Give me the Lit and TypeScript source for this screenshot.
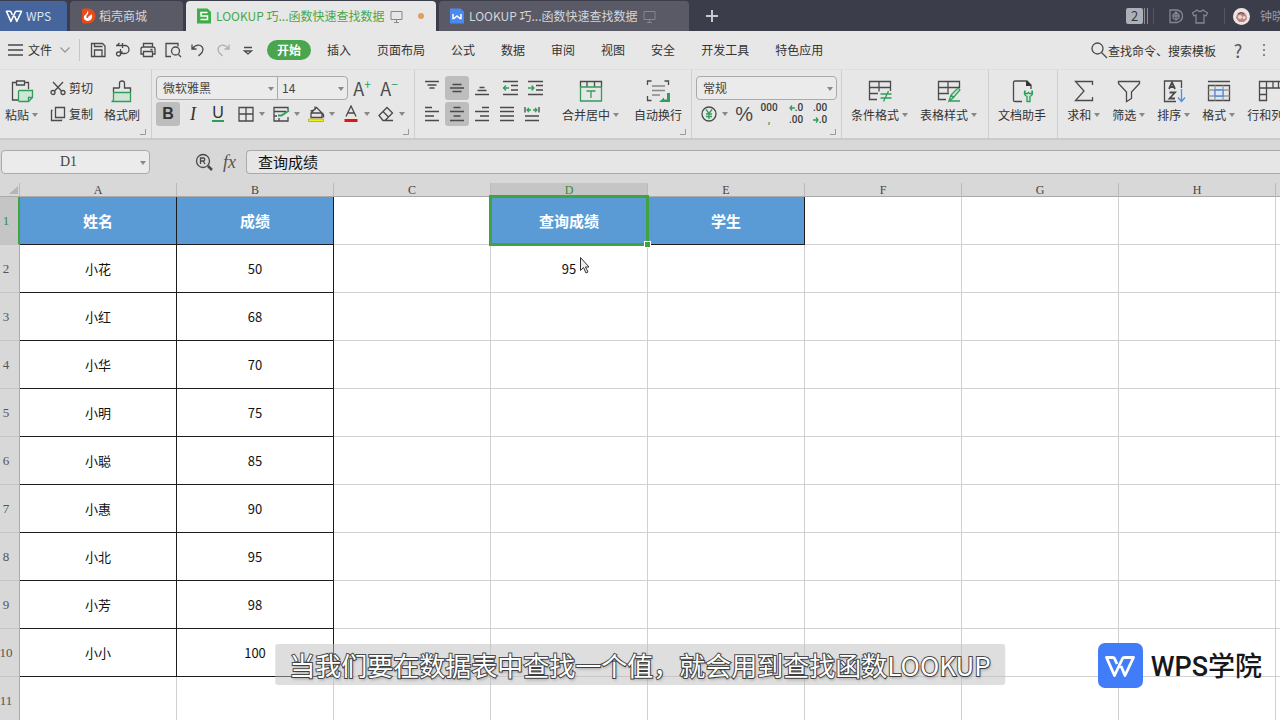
import { LitElement, html, svg, css, nothing } from "lit";
import type { SVGTemplateResult } from "lit";
import { customElement, state } from "lit/decorators.js";
import { classMap } from "lit/directives/class-map.js";

type Glyph = SVGTemplateResult;

const icons: Record<string, Glyph> = {
  menu: svg`<path d="M1 4h15M1 9h15M1 14h15"/>`,
  save: svg`<path d="M2.500 2.500h11l2.500 2.500v10.500H2.500zM5.500 2.500v3h8M5.500 15v-6h7.500v6"/>`,
  output: svg`<path d="M2 4.500h9a3.500 3.500 0 0 1 0 8H6.500M5.500 2L3 4.500M8.500 2v5M6.500 8v5a2 2 0 1 1-2-2h4"/>`,
  print: svg`<path d="M4.500 6V2.500h9V6M4.500 13H2V8q0-2 2-2h10q2 0 2 2v5h-2.500M4.500 10.500h9v5h-9zM11.500 8.500h2"/>`,
  preview: svg`<path d="M7 15.500H2v-13h12v3M14.500 13.500l2.500 2.500"/><circle cx="11.500" cy="10" r="4"/>`,
  undo: svg`<path d="M3 3.500v4.500h4.500M3.500 7.500Q7 3 11.500 4.500Q15.500 7 13 11.500L9.500 15"/>`,
  redo: svg`<path d="M15 3.500v4.500h-4.500M14.500 7.500Q11 3 6.500 4.500Q2.500 7 5 11.500L8.500 15"/>`,
  more: svg`<path d="M5 6.500h8M5.500 10l3.500 3 3.500-3z"/>`,
  search: svg`<circle cx="7.500" cy="7.500" r="5.500"/><path d="M11.500 11.500L17 17"/>`,
  paste: svg`<path d="M6 3.500H2.500v17.500H8M15 3.500h3.500V10M6.500 2h8v4h-8z"/><path class="gf" d="M8.500 12.500q0-1 1-1h13v7l-4 4H9.500q-1 0-1-1zM22.500 18.500h-4v4"/>`,
  cut: svg`<path d="M4 3l8.500 9M14 3L5.500 12"/><circle cx="4" cy="13.500" r="2"/><circle cx="14" cy="13.500" r="2"/>`,
  copy: svg`<path d="M6.500 2.500h9v10h-9zM3.500 5.500h-1v10h10v-1"/>`,
  painter: svg`<path d="M9.500 9V4q0-2 2.500-2t2.500 2v5h6v4M9.500 9h-6v4"/><path class="gf" d="M3.500 13.500h17V22.500H1.500q2 0 2-2z"/>`,
  border: svg`<path d="M2 2.500h14v13.500H2zM9 2.500V16M2 9h14"/>`,
  format: svg`<path d="M16 5V2.500H2v13.500h14v-4M2 6.500h12M2 11h3M7 16v-3"/><path class="g" stroke-width="2" d="M6 10.500h3.500L17 5.500"/>`,
  fill: svg`<path d="M4 12.500V8l5.500-5.500L15 8v4.500zM4 8h11M8 1.500v3L3.500 6M15.500 8q1.500 2 1 4.500"/><path d="M1.500 14h15v2.500h-15z" fill="#f2ee18" stroke="#b9b630" stroke-width="1"/>`,
  color: svg`<path d="M4 11.500L9 1l5 10.500M6 8h6"/><path d="M2.500 15.500h13" stroke="#df1515" stroke-width="3"/>`,
  eraser: svg`<path d="M2 10.500L10 2.500l5.500 5.500L8 15.500H6zM6 6.500l5.500 5.500M8 15.500h8"/>`,
  vtop: svg`<path d="M2 2.500h14M4.500 6h9M6.500 9h5"/>`,
  vmid: svg`<path d="M4.500 5.500h9M2 9h14M4.500 12.500h9"/>`,
  vbot: svg`<path d="M6.500 8.500h5M4.500 11.500h9M2 15.500h14"/>`,
  left: svg`<path d="M2 2.500h7M2 6.500h14M2 11h9M2 15.500h14"/>`,
  center: svg`<path d="M5.500 2.500h7M2 6.500h14M5.500 11h7M2 15.500h14"/>`,
  right: svg`<path d="M9 2.500h7M2 6.500h14M7 11h9M2 15.500h14"/>`,
  justify: svg`<path d="M2 2.500h14M2 6.500h14M2 11h14M2 15.500h14"/>`,
  spread: svg`<path d="M2 2v5.500M16 2v5.500M2 11h14M2 15.500h14"/><path class="g" d="M8 5H4M6 3L4 5l2 2M10 5h4M12 3l2 2-2 2"/>`,
  outdent: svg`<path d="M2 2.500h15M10 6.500h7M10 11h7M2 15.500h15"/><path class="g" d="M8 9H2.500M5 6.500L2.500 9 5 11.500"/>`,
  indent: svg`<path d="M2 2.500h15M10 6.500h7M10 11h7M2 15.500h15"/><path class="g" d="M2 9h6M5.500 6.500L8 9l-2.500 2.500"/>`,
  merge: svg`<path d="M1.500 8V2.500h21V8M8 2.500V8M15.500 2.500V8"/><path class="g" d="M1.500 8h21v14h-21zM7.500 12h9M12 12v7"/>`,
  wrap: svg`<path d="M1.500 6V2h4M18.500 2h4v4M1.500 17v4.500h4"/><path d="M6 7h13M6 11.500h13M6 16h8" stroke="#888"/><path d="M24 14v9H13l5-4.500v2h3V14z" fill="#2f9e5b" stroke="none"/>`,
  yen: svg`<circle cx="9" cy="9" r="7"/><path class="g" d="M6 4.500l3 4 3-4M9 8.500V14M6 9h6M6 11.500h6"/>`,
  cond: svg`<path d="M9 20.500H1.500V2.500h21V12M1.500 8.500h21M1.500 14.500H10M11 2.500v10"/><path class="g" d="M12.500 15h11M12.500 19h11M20.500 12l-5 10.500"/>`,
  style: svg`<path d="M9 20.500H1.500V2.500h21V9M1.500 8.500h21M1.500 14.500H12M11 2.500v11"/><path class="gf" d="M12 22l2-6 6-6q2-1 3 1l-7 8zM12 22h11M14 16l3 3"/>`,
  doc: svg`<path d="M12 22.500H5Q3.500 22.500 3.500 21V3.500Q3.500 2 5 2h12l4 4v4"/><path d="M16 2h1l4 4v1h-5z" fill="#333" stroke="none"/><path class="gf" d="M15 11.500q-2 4 2 6v5h3v-5q4-2 2-6v3h-2.500l-1-1-1 1H15z"/>`,
  sum: svg`<path d="M20.500 6V2.500H3.500L12 12 3.500 21.500h17V18"/>`,
  filter: svg`<path d="M1.500 2.500h21v2L14.500 13v6.500l-5 3V13L1.500 4.500z"/>`,
  sort: svg`<path d="M14 22.500H2.500V2h17V9"/><path d="M7 10l3-6.500L13 10M8 8h4M7.500 13.500h5.500l-5.500 6h5.500" stroke-width="1.800"/><path d="M19.500 10v12M16 18.500l3.500 4 3.500-4" stroke="#4f8de0"/>`,
  cells: svg`<path d="M1 2.500h22M1.500 6.500h21V21.500h-21z"/><path d="M1.500 11h21M1.500 17h21M8 6.500v15M16 6.500v15" stroke="#999"/><path d="M8 11h8v6H8z" stroke="#4f8de0" fill="#dce8f8"/>`,
  rowcol: svg`<path d="M1.500 2.500h24v6.500H8.500V21.500H1.500zM8.500 2.500v6.500H1.500M1.500 15.500h7M15 2.500v6.500M20.500 2.500v6.500"/>`,
  lens: svg`<circle cx="8" cy="8" r="6.500"/><path d="M5.500 11V5H9q1.500 1 0 3H5.500M8 8l2 3"/><path d="M13 13L17 17" stroke-width="2.500"/>`,
  screen: svg`<path d="M3 4.500h11v8H3zM8.500 12.500V15M6 15.500h5"/>`,
  plus: svg`<path d="M9 3v12M3 9h12" stroke-width="2"/>`,
  docer: svg`<path d="M3 3h7q5.500 1 5.500 6T10 15.500H3z"/><path d="M6 8l3-3 3 3v3l-3 2-3-2zM9 5v8M6 9h6"/>`,
  shirt: svg`<path d="M6 3q3 3 6 0l4.500 3-1.500 3-2-1v8H5V8L3 9 1.500 6z"/>`,
};

const icon = (name: string, size = 18) => html`<svg class="ic" width=${size} height=${size}
  viewBox=${size === 24 ? "0 0 24 24" : "0 0 18 18"} aria-hidden="true">${icons[name]}</svg>`;

const arrow = html`<svg class="arrow" width="6" height="4" viewBox="0 0 6 4" aria-hidden="true"><path d="M0 0h6L3 4z"/></svg>`;
const corner = html`<svg class="corner" width="6" height="6" viewBox="0 0 6 6" aria-hidden="true"><path d="M5.500 0v5.500H0"/></svg>`;
const shiftLeft = html`<svg class="shift" width="6" height="6" viewBox="0 0 6 6" aria-hidden="true"><path d="M6 3H1M3 .500L1 3l2 2.500"/></svg>`;
const shiftRight = html`<svg class="shift" width="6" height="6" viewBox="0 0 6 6" aria-hidden="true"><path d="M0 3h5M3 .500L5 3 3 5.500"/></svg>`;

const wpsMark = (size: number) => html`<svg class="mark" width=${size} height=${size} viewBox="0 0 32 32" aria-hidden="true">
  <path d="M13 14L10.500 8.500Q10 7.500 8.500 7.500H2.500L10.500 25.500L18.500 8.500Q19 7.500 20.500 7.500H29.500L21 25.500L17 16"/></svg>`;

@customElement("app-root")
export class AppRoot extends LitElement {
  @state() private menuTab = "开始";

  private readonly menus = ["开始", "插入", "页面布局", "公式", "数据", "审阅", "视图", "安全", "开发工具", "特色应用"];
  private readonly columns = ["A", "B", "C", "D", "E", "F", "G", "H"];
  private readonly rows: string[][] = [
    ["姓名", "成绩", "", "查询成绩", "学生"],
    ["小花", "50", "", "95"],
    ["小红", "68"],
    ["小华", "70"],
    ["小明", "75"],
    ["小聪", "85"],
    ["小惠", "90"],
    ["小北", "95"],
    ["小芳", "98"],
    ["小小", "100"],
    [],
  ];

  static styles = css`
    :host {
      display: flex;
      flex-direction: column;
      position: relative;
      height: 100vh;
      overflow: hidden;
      background: #fff;
      color: #333;
      font: 12px/16px "Noto Sans CJK SC", sans-serif;
    }
    * { box-sizing: border-box; }
    button, input, select { font: inherit; color: inherit; margin: 0; padding: 0; border: 0; background: none; }
    button { display: flex; align-items: center; justify-content: center; flex: none; white-space: nowrap; }
    svg { display: block; flex: none; }
    .ic { fill: none; stroke: #4a4a4a; stroke-width: 1.3; }
    .ic .g { stroke: #2f9e5b; }
    .ic .gf { stroke: #2f9e5b; fill: #cfe6d6; }
    .arrow { fill: #888; }
    .mark { fill: none; stroke: #fff; stroke-width: 2.8; stroke-linejoin: round; }

    .title { display: flex; flex: none; height: 31px; padding-top: 1px; background: #3b3d4b; color: #d5d5da; overflow: hidden; }
    .title .ic { stroke: #85868f; }
    .tab { height: 30px; border-radius: 4px 4px 0 0; background: #595a65; justify-content: flex-start; margin-right: 3px; }
    .tab.home { width: 67px; padding-left: 5px; gap: 3px; background: #45659c; color: #dfe6f2; border-radius: 0 4px 0 0; }
    .tab.store { width: 113px; padding-left: 10px; gap: 3px; }
    .tab.book { width: 250px; padding-left: 9px; gap: 3px; }
    .tab.book .ic { stroke-width: 1; }
    .tab.book.on { background: #e7e7e7; color: #47a847; }
    .dot { width: 6px; height: 6px; border-radius: 3px; background: #e0a05a; margin-left: 9px; }
    .add { width: 40px; height: 30px; }
    .title .add .ic { stroke: #c8c8ce; stroke-width: 1; }
    .account { display: flex; align-items: center; margin-left: auto; height: 30px; }
    .badge { width: 17px; height: 16px; border-radius: 2px; background: #aeb0b8; color: #33343f; font-size: 13px; }
    .bars { width: 4px; height: 16px; border-left: 1px solid #8a8b94; border-right: 1px solid #8a8b94; margin-left: 1px; }
    .rule { width: 1px; height: 16px; background: #555762; }
    .account .rule { margin: 0 13px 0 5px; }
    .account .rule.second { margin: 0 8px 0 15px; }
    .account .shirt { margin-left: 6px; }
    .user { width: 20px; margin-left: 10px; overflow: hidden; white-space: nowrap; color: #9a9ba4; }

    .menu { display: flex; align-items: center; flex: none; height: 38px; background: #e7e7e7; padding-left: 7px; white-space: nowrap; }
    .file { gap: 3px; }
    .file .chev { margin-left: 4px; fill: none; stroke: #999; stroke-width: 1.3; }
    .menu > .rule { height: 22px; background: #c6c6c6; margin: 0 5px 0 8px; }
    .quick { width: 25px; height: 24px; }
    .quick.off { opacity: 0.35; }
    .tabs { display: flex; align-items: center; gap: 26px; margin-left: 7px; }
    .tabs button.on { width: 44px; height: 20px; border-radius: 10px; background: #4aa64e; color: #fff; font-weight: 700; margin-right: -10px; }
    .search { display: flex; align-items: center; margin-left: auto; }
    .search input { width: 110px; height: 20px; }
    .search input::placeholder { color: #333; opacity: 1; }
    .help { width: 20px; margin-left: 10px; font-size: 18px; color: #555; }
    .dots { width: 16px; margin: 0 8px; }
    .dots svg { fill: #666; }

    .ribbon { display: flex; flex: none; height: 71px; background: #e7e7e7; border-top: 1px solid #dedede; border-bottom: 2px solid #cbcbcb; overflow: hidden; }
    .group { position: relative; display: flex; flex: none; gap: 12px; padding: 6px 11px 0 9px; border-right: 1px solid #cfcfcf; }
    .group.clip { padding-left: 5px; gap: 11px; }
    .group.font { padding-left: 4px; padding-right: 9px; }
    .group.num { padding-left: 4px; padding-right: 4px; }
    .group.align { padding-left: 5px; padding-right: 9px; gap: 15px; }
    .group:last-child { border-right: 0; }
    .corner { position: absolute; right: 5px; bottom: 3px; fill: none; stroke: #999; }
    .big { flex-direction: column; justify-content: flex-start; padding-top: 3px; gap: 4px; height: 54px; }
    .lab { display: flex; align-items: center; gap: 3px; height: 16px; }
    .rows { display: flex; flex-direction: column; gap: 2px; }
    .line { display: flex; align-items: center; height: 24px; gap: 1px; }
    .small { height: 24px; gap: 2px; }
    .sq { width: 24px; height: 24px; border-radius: 3px; }
    .sq.on { background: #bdbdbd; }
    .sq.far { margin-left: 3px; }
    .drop { width: 28px; height: 24px; gap: 4px; margin-left: 6px; }
    .bold { font: 700 16px/20px "Liberation Sans", sans-serif; }
    .ital { font: italic 18px/20px "Liberation Serif", serif; }
    .under { font: 16px/14px "Liberation Sans", sans-serif; border-bottom: 2px solid #2f9e5b; }
    .sized { font: 18px/20px "Noto Sans CJK SC", sans-serif; width: 26px; color: #4a4a4a; }
    .sized sup { font-size: 12px; line-height: 12px; color: #2f9e5b; align-self: flex-start; }
    .combo { position: relative; display: flex; align-items: center; height: 24px; border: 1px solid #aaa; background: #ebebeb; color: #444; }
    .combo select, .combo input { appearance: none; width: 100%; height: 100%; padding-left: 6px; outline: 0; }
    .combo .arrow { position: absolute; right: 3px; top: 10px; pointer-events: none; }
    .combo.face { width: 122px; border-radius: 4px 0 0 4px; margin-right: -2px; }
    .combo.size { width: 71px; border-radius: 0 4px 4px 0; }
    .combo.size select { padding-left: 4px; }
    .combo.kind { width: 141px; border-radius: 4px; }
    .digits { flex-direction: column; width: 24px; font: 500 10px/12px Roboto, sans-serif; color: #3a3a3a; }
    .digits span { display: flex; align-items: center; }
    .digits b { color: #2f9e5b; }
    .shift { fill: none; stroke: #2f9e5b; stroke-width: 1.3; }
    .pct { width: 26px; font: 20px/24px "Liberation Sans", sans-serif; color: #4a4a4a; margin-left: 3px; }
    .narrow { gap: 0; }
    .narrow .drop { margin-left: 4px; }

    .formula { display: flex; align-items: center; flex: none; height: 43px; padding: 2px 0 1px 1px; background: #d8d8d8; }
    .combo.name { width: 149px; border-radius: 4px; font: 14px/20px "Liberation Serif", serif; }
    .combo.name input { text-align: center; padding: 0 14px 0 0; }
    .formula .lens { margin-left: 45px; }
    .fx { width: 33px; font: italic 18px/20px "Liberation Serif", serif; color: #555; }
    .entry { flex: 1; height: 24px; border: 1px solid #aaa; border-right: 0; border-radius: 4px 0 0 4px; background: #e6e6e6; padding: 0 0 2px 11px; font-size: 15px; color: #111; }

    .sheet { flex: 1; min-height: 0; overflow: hidden; }
    table { table-layout: fixed; width: 0; border-collapse: separate; border-spacing: 0; }
    .c0 { width: 20px; }
    .c1 { width: 157px; }
    th, td { padding: 0; text-align: center; font-weight: 400; border-right: 1px solid #d0d0d0; border-bottom: 1px solid #d0d0d0; white-space: nowrap; }
    thead th { height: 14px; font: 12px/12px "Liberation Serif", serif; background: #d8d8d8; color: #444; border-right-color: #bbb; border-bottom-color: #aaa; }
    thead th.on { background: #c5c5c5; color: #3a8a3a; }
    tbody th { height: 48px; padding-right: 7px; background: #d8d8d8; font: 13px/16px "Liberation Serif", serif; color: #555; border-right-color: #aaa; border-bottom-color: #c4c4c4; }
    tbody th div { display: flex; justify-content: center; }
    tbody th.on { background: #c5c5c5; color: #3a8a3a; border-right: 2px solid #3fa33f; padding-right: 6px; }
    .all svg { fill: #b5b5b5; margin-left: 9px; }
    td { position: relative; font-size: 13px; color: #111; }
    td.data { border-color: #1c1c1c; }
    td.head { background: #5b9bd5; color: #fff; font-weight: 700; font-size: 15px; border-color: #1c1c1c; }
    .pick { position: absolute; inset: -2px; border: 3px solid #3fa33f; z-index: 1; }
    .pick i { position: absolute; right: -5px; bottom: -5px; width: 7px; height: 7px; background: #3fa33f; border: 1px solid #fff; }

    .cursor { position: absolute; left: 579px; top: 256px; fill: #eee; stroke: #333; z-index: 2; }
    .caption { position: absolute; left: 50%; bottom: 35px; transform: translateX(-50%); height: 41px; padding: 0 14px; border-radius: 3px; background: rgba(190, 190, 190, 0.5); color: #fff; font-size: 26px; line-height: 41px; white-space: nowrap; -webkit-text-stroke: 2px #4a4a4a; paint-order: stroke fill; text-shadow: 1px 2px 3px rgba(0, 0, 0, 0.3); z-index: 2; }
    .brand { position: absolute; right: 18px; bottom: 32px; display: flex; align-items: center; gap: 8px; font: 500 27px/45px Roboto, "Noto Sans CJK SC", sans-serif; color: #17181a; z-index: 2; }
    .brand b { font-weight: 500; padding-top: 4px; line-height: 41px; }
    .brand span { display: flex; align-items: center; justify-content: center; width: 45px; height: 45px; border-radius: 7px; background: #417df8; }
  `;

  private big(name: string, label: string, drop = true) {
    return html`<button class="big">${icon(name, 24)}<span class="lab">${label}${drop ? arrow : nothing}</span></button>`;
  }

  private sq(name: string, label: string, on = false, far = false) {
    return html`<button class=${classMap({ sq: true, on, far })} aria-label=${label}>${icon(name)}</button>`;
  }

  private drop(name: string, label: string) {
    return html`<button class="drop" aria-label=${label}>${icon(name)}${arrow}</button>`;
  }

  private titleBar() {
    return html`<header class="title">
      <button class="tab home">${wpsMark(18)}WPS</button>
      <button class="tab store">
        <svg width="16" height="16" viewBox="0 0 16 16" aria-hidden="true"><path d="M2 2q0-1.500 2-1.500h4a7 7 0 0 1 0 15H4q-2 0-2-2z" fill="#e84a1c"/><path d="M8 2.500q1 3-1.500 5V10q1.500.500 2-1.500L12 6q1 6-4 7-5-.500-4-5 3-2 4-5.500z" fill="#fff"/></svg>
        稻壳商城
      </button>
      <button class="tab book on">
        <svg width="18" height="18" viewBox="0 0 18 18" aria-hidden="true"><path d="M2 1.500h10.500L16 5v11.500H2z" fill="#3fae49"/><path d="M12.500 5.500H6V9h6.500v3.500H5.500" fill="none" stroke="#fff" stroke-width="1.500"/></svg>
        LOOKUP 巧...函数快速查找数据 ${icon("screen")}<span class="dot"></span>
      </button>
      <button class="tab book">
        <svg width="18" height="18" viewBox="0 0 18 18" aria-hidden="true"><path d="M2 1.500h10.500L16 5v11.500H2z" fill="#4a8af0"/><path d="M5 7v4.500h1L9 9l3 2.500h1V7" fill="none" stroke="#fff" stroke-width="1.500"/></svg>
        LOOKUP 巧...函数快速查找数据 ${icon("screen")}
      </button>
      <button class="add" aria-label="新建">${icon("plus")}</button>
      <div class="account">
        <button class="badge">2</button><span class="bars"></span><span class="rule"></span>
        ${icon("docer")}<span class="shirt">${icon("shirt")}</span><span class="rule second"></span>
        <svg width="17" height="17" viewBox="0 0 17 17" aria-hidden="true"><circle cx="8.500" cy="8.500" r="8.500" fill="#eee5e3"/><path d="M3 10q1-7 6-6 5 1 5 7l-3 3H6z" fill="#b98680"/><circle cx="7" cy="9" r="2" fill="#f1d9d2"/><circle cx="11" cy="9.500" r="1.500" fill="#f1d9d2"/><path d="M5 6q3-3 6 0" fill="none" stroke="#5d4548"/></svg>
        <span class="user">钟晓</span>
      </div>
    </header>`;
  }

  private menuBar() {
    const quick: [string, string][] = [["save", "保存"], ["output", "输出"], ["print", "打印"], ["preview", "打印预览"], ["undo", "撤销"], ["redo", "恢复"], ["more", "更多"]];
    return html`<nav class="menu">
      <button class="file">${icon("menu")}文件<svg class="chev" width="12" height="8" viewBox="0 0 12 8" aria-hidden="true"><path d="M1.500 1.500L6 6l4.500-4.500"/></svg></button>
      <span class="rule"></span>
      ${quick.map(([n, l]) => html`<button class=${classMap({ quick: true, off: n === "redo" })} aria-label=${l}>${icon(n)}</button>`)}
      <div class="tabs">${this.menus.map((m) => html`<button class=${classMap({ on: m === this.menuTab })} @click=${() => (this.menuTab = m)}>${m}</button>`)}</div>
      <label class="search">${icon("search")}<input placeholder="查找命令、搜索模板" aria-label="查找命令、搜索模板"></label>
      <button class="help">?</button>
      <button class="dots" aria-label="菜单"><svg width="4" height="14" viewBox="0 0 4 14"><circle cx="2" cy="2" r="1"/><circle cx="2" cy="7" r="1"/><circle cx="2" cy="12" r="1"/></svg></button>
    </nav>`;
  }

  private ribbon() {
    return html`<section class="ribbon">
      <div class="group clip">
        ${this.big("paste", "粘贴")}
        <div class="rows">
          <button class="small">${icon("cut")}剪切</button>
          <button class="small">${icon("copy")}复制</button>
        </div>
        ${this.big("painter", "格式刷", false)}${corner}
      </div>
      <div class="group font">
        <div class="rows">
          <div class="line">
            <label class="combo face"><select aria-label="字体"><option>微软雅黑</option></select>${arrow}</label>
            <label class="combo size"><select aria-label="字号"><option>14</option></select>${arrow}</label>
            <button class="sized" aria-label="增大字号">A<sup>+</sup></button>
            <button class="sized" aria-label="减小字号">A<sup>−</sup></button>
          </div>
          <div class="line">
            <button class="sq on bold">B</button>
            <button class="sq ital">I</button>
            <button class="sq"><span class="under">U</span></button>
            ${this.drop("border", "边框")}${this.drop("format", "格式")}${this.drop("fill", "填充颜色")}${this.drop("color", "字体颜色")}${this.drop("eraser", "清除")}
          </div>
        </div>${corner}
      </div>
      <div class="group align">
        <div class="rows">
          <div class="line">${this.sq("vtop", "顶端对齐")}${this.sq("vmid", "垂直居中", true)}${this.sq("vbot", "底端对齐")}${this.sq("outdent", "减少缩进", false, true)}${this.sq("indent", "增加缩进")}</div>
          <div class="line">${this.sq("left", "左对齐")}${this.sq("center", "水平居中", true)}${this.sq("right", "右对齐")}${this.sq("justify", "两端对齐")}${this.sq("spread", "分散对齐")}</div>
        </div>
        ${this.big("merge", "合并居中")}${this.big("wrap", "自动换行", false)}${corner}
      </div>
      <div class="group num">
        <div class="rows">
          <label class="combo kind"><select aria-label="数字格式"><option>常规</option></select>${arrow}</label>
          <div class="line narrow">
            ${this.drop("yen", "货币")}<button class="pct">%</button>
            <button class="digits"><span>000</span><b>,</b></button>
            <button class="digits sq far"><span>${shiftLeft}.0</span><span>.00</span></button>
            <button class="digits"><span>.00</span><span>${shiftRight}.0</span></button>
          </div>
        </div>${corner}
      </div>
      <div class="group">${this.big("cond", "条件格式")}${this.big("style", "表格样式")}</div>
      <div class="group">${this.big("doc", "文档助手", false)}</div>
      <div class="group">${this.big("sum", "求和")}${this.big("filter", "筛选")}${this.big("sort", "排序")}${this.big("cells", "格式")}${this.big("rowcol", "行和列")}</div>
    </section>`;
  }

  private cell(text: string, r: number, c: number) {
    const head = r === 0 && text !== "";
    return html`<td class=${classMap({ head, data: c < 2 && r > 0 && r < 10 })}>${text}${r === 0 && c === 3 ? html`<span class="pick"><i></i></span>` : nothing}</td>`;
  }

  render() {
    return html`
      ${this.titleBar()}${this.menuBar()}${this.ribbon()}
      <section class="formula">
        <label class="combo name"><input aria-label="名称框" value="D1">${arrow}</label>
        <button class="lens" aria-label="查找">${icon("lens")}</button>
        <button class="fx">fx</button>
        <input class="entry" aria-label="编辑栏" value="查询成绩">
      </section>
      <main class="sheet">
        <table>
          <colgroup><col class="c0">${this.columns.map(() => html`<col class="c1">`)}<col class="c1"></colgroup>
          <thead><tr>
            <th class="all"><svg width="9" height="8" viewBox="0 0 9 8" aria-hidden="true"><path d="M9 0v8H0z"/></svg></th>
            ${this.columns.map((c) => html`<th class=${classMap({ on: c === "D" })}>${c}</th>`)}<th></th>
          </tr></thead>
          <tbody>${this.rows.map((row, r) => html`<tr>
            <th class=${classMap({ on: r === 0 })}><div>${r + 1}</div></th>
            ${this.columns.map((_, c) => this.cell(row[c] ?? "", r, c))}<td></td>
          </tr>`)}</tbody>
        </table>
      </main>
      <svg class="cursor" width="12" height="19" viewBox="0 0 12 19" aria-hidden="true"><path d="M1.500 1.500v13l3-3 2.500 5.500 2-1-2.500-5H10z"/></svg>
      <div class="caption">当我们要在数据表中查找一个值，就会用到查找函数LOOKUP</div>
      <div class="brand"><span>${wpsMark(32)}</span><b>WPS学院</b></div>
    `;
  }
}
